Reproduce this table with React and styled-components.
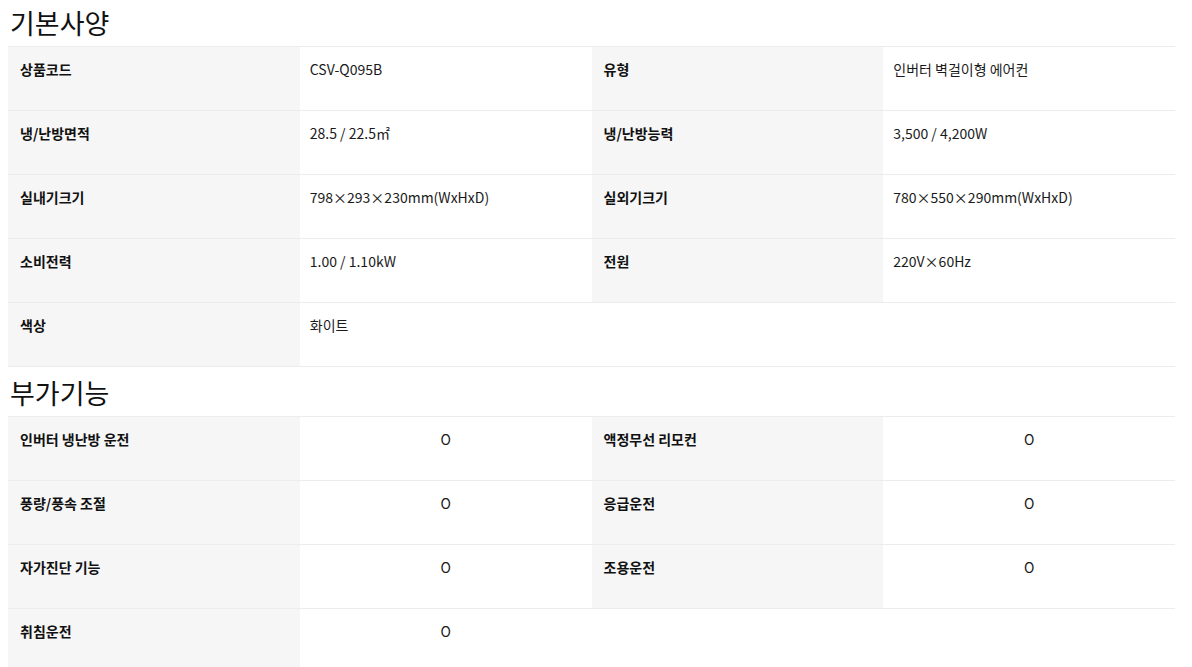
import styled, { createGlobalStyle } from 'styled-components'

const GlobalStyle = createGlobalStyle`
    body {
        margin: 8px;
        background: #fff;
        font-family: "Noto Sans CJK KR", "Noto Sans", sans-serif;
        color: #222;
    }
`

const Title = styled.h3`
    margin: ${(p) => (p.first ? '0' : '11px')} 0 0;
    padding: 0 0 8px 2px;
    font-size: 27px;
    font-weight: 400;
    line-height: 30px;
    color: #111;
`

const Spec = styled.div`
    display: grid;
    width: 1167px;
    grid-template-columns: repeat(4, 1fr);
    border-bottom: 1px solid #ececec;
`

const Cell = styled.div`
    height: 64px;
    box-sizing: border-box;
    border-top: 1px solid #ececec;
    padding: ${(p) => (p.head ? '12px 12px' : '12px 10px')};
    font-size: 14px;
    line-height: 20px;
    background: ${(p) => (p.head ? '#f6f6f6' : '#fff')};
    font-weight: ${(p) => (p.head ? 600 : 400)};
    color: ${(p) => (p.head ? '#111' : '#1a1a1a')};
    text-align: ${(p) => (p.center ? 'center' : 'left')};
`

const basic = [
    ['상품코드', 'CSV-Q095B'],
    ['유형', '인버터 벽걸이형 에어컨'],
    ['냉/난방면적', '28.5 / 22.5㎡'],
    ['냉/난방능력', '3,500 / 4,200W'],
    ['실내기크기', '798×293×230mm(WxHxD)'],
    ['실외기크기', '780×550×290mm(WxHxD)'],
    ['소비전력', '1.00 / 1.10kW'],
    ['전원', '220V×60Hz'],
    ['색상', '화이트'],
]

const extra = [
    ['인버터 냉난방 운전', 'O'],
    ['액정무선 리모컨', 'O'],
    ['풍량/풍속 조절', 'O'],
    ['응급운전', 'O'],
    ['자가진단 기능', 'O'],
    ['조용운전', 'O'],
    ['취침운전', 'O'],
]

function SpecTable({ items, center }) {
    const pad = items.length % 2 ? [<Cell key="e1" />, <Cell key="e2" />] : null
    return (
        <Spec>
            {items.map(([k, v]) => [
                <Cell head key={k + 'h'}>{k}</Cell>,
                <Cell center={center} key={k + 'v'}>{v}</Cell>,
            ])}
            {pad}
        </Spec>
    )
}

export default function App() {
    return (
        <>
            <GlobalStyle />
            <Title first>기본사양</Title>
            <SpecTable items={basic} />
            <Title>부가기능</Title>
            <SpecTable items={extra} center />
        </>
    )
}
